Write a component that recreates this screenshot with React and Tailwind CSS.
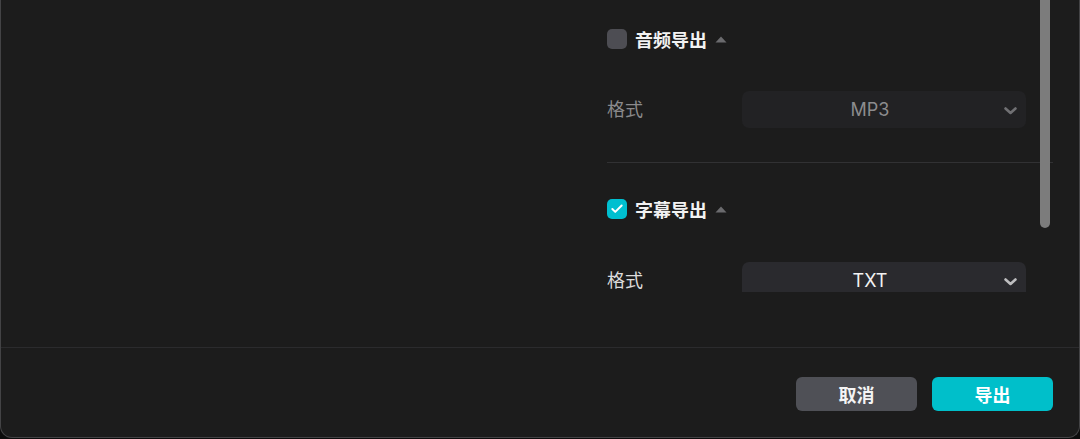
import { Check } from 'lucide-react'

const cjk = { fontFamily: '"Noto Sans CJK SC", "Noto Sans", sans-serif' }

function Caret() {
  return (
    <svg width="12" height="7" viewBox="0 0 12 7" className="ml-[8px] mt-[1px]">
      <path d="M6 0.5 L11.5 6.5 L0.5 6.5 Z" fill="#6b6b6e" />
    </svg>
  )
}

function Chevron({ color }) {
  return (
    <svg width="13" height="8" viewBox="0 0 13 8" className="absolute right-[9px] top-[16px]">
      <path d="M1.5 1.5 L6.5 6 L11.5 1.5" fill="none" stroke={color} strokeWidth="2.6" strokeLinecap="round" strokeLinejoin="round" />
    </svg>
  )
}

function Section({ title, checked }) {
  return (
    <div className="flex h-[20px] items-center">
      {checked ? (
        <div className="flex h-[20px] w-[20px] items-center justify-center rounded-[5px] bg-[#00bfd0]">
          <Check size={14} strokeWidth={3.4} className="text-white" />
        </div>
      ) : (
        <div className="h-[20px] w-[20px] rounded-[5px] bg-[#4d4d53]" />
      )}
      <span className="ml-[8px] text-[18px] font-bold leading-none text-[#f2f2f2]" style={cjk}>
        {title}
      </span>
      <Caret />
    </div>
  )
}

function FormatRow({ value, disabled, className }) {
  return (
    <div className={`flex items-center ${className}`}>
      <span
        className={`-mt-[3px] w-[135px] text-[18px] leading-none ${disabled ? 'text-[#8a8a8c]' : 'text-[#dcdcdc]'}`}
        style={cjk}
      >
        格式
      </span>
      <div
        className={`relative flex h-[37px] w-[284px] items-center justify-center rounded-[7px] pr-[28px] ${
          disabled ? 'bg-[#222224]' : 'bg-[#2a2a2e]'
        }`}
      >
        <span
          className={`text-[18px] ${disabled ? 'text-[#8c8c8e]' : 'text-[#f2f2f2]'}`}
          style={{ fontFamily: 'Inter, "Liberation Sans", sans-serif' }}
        >
          {value}
        </span>
        <Chevron color={disabled ? '#707073' : '#bdbdbf'} />
      </div>
    </div>
  )
}

export default function App() {
  return (
    <div className="h-[439px] w-[1080px] bg-[#0c0c0c]">
      <div className="relative flex h-[438px] w-full flex-col rounded-b-[12px] border border-t-0 border-[#434345] bg-[#1c1c1c]">
        <div className="flex h-[347px]">
          <div className="w-[606px]" />
          <div className="h-[292px] w-[446px] overflow-hidden pt-[29px]">
            <Section title="音频导出" />
            <FormatRow value="MP3" disabled className="mt-[42px]" />
            <div className="mt-[34px] h-px w-[446px] bg-[#313133]" />
            <div className="mt-[36px]">
              <Section title="字幕导出" checked />
            </div>
            <FormatRow value="TXT" className="mt-[43px]" />
          </div>
        </div>
        <div className="absolute left-[1039px] top-0 h-[228px] w-[10px] rounded-b-full bg-[#7c7c7c]" />
        <div className="flex flex-1 items-start justify-end gap-[15px] border-t border-[#2b2b2d] pr-[26px] pt-[29px]">
          <button
            className="flex h-[34px] w-[121px] items-center justify-center rounded-[6px] bg-[#4f5056] text-[18px] font-bold text-[#f4f4f4]"
            style={cjk}
          >
            取消
          </button>
          <button
            className="flex h-[34px] w-[121px] items-center justify-center rounded-[6px] bg-[#00bfca] text-[18px] font-bold text-white"
            style={cjk}
          >
            导出
          </button>
        </div>
      </div>
    </div>
  )
}
